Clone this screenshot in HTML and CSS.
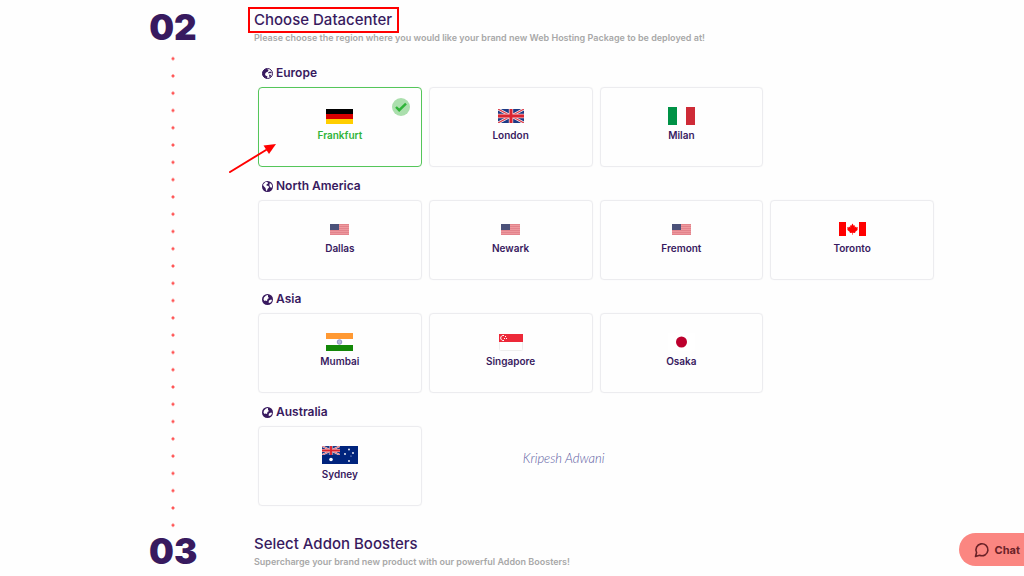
FILE: index.html
```html
<!DOCTYPE html>
<html lang="en">
<head>
    <meta charset="UTF-8">
    <meta name="viewport" content="width=device-width, initial-scale=1.0">
    <title>Choose Datacenter</title>
    <link rel="stylesheet" href="styles.css">
</head>
<body>
<svg class="sprite" aria-hidden="true">
    <symbol id="flag-us" viewBox="0 0 19 11">
        <path fill="#ee9a9f" d="M0 0h19v11H0z"/>
        <path stroke="#dd7b84" stroke-width=".8" d="M0 .4h19M0 2.5h19M0 4.6h19M0 6.6h19M0 8.6h19M0 10.6h19"/>
        <path fill="#4b5179" d="M0 0h9v6H0z"/>
    </symbol>
    <symbol id="flag-gb" viewBox="0 0 26 14" preserveAspectRatio="none">
        <path fill="#1d3a85" d="M0 0h26v14H0z"/>
        <path stroke="#fff" stroke-width="2.6" d="M0 0l26 14M26 0L0 14"/>
        <path stroke="#dc3a48" stroke-width="1.2" d="M0 0l26 14M26 0L0 14"/>
        <path stroke="#f3c9d0" stroke-width="4.4" d="M13 0v14M0 7h26"/>
        <path stroke="#d9242f" stroke-width="2.8" d="M13 0v14M0 7h26"/>
    </symbol>
    <symbol id="globe-asia" viewBox="0 0 22 22">
        <circle cx="11" cy="11" r="11" fill="#381a5f"/>
        <path fill="#fff" d="M3 11l1-4 4-4 4-1 0 4 2 2-3 2-1 4-3-1-2 1zM14 13l4-2 2 1-1 3-3 3-3-1z"/>
    </symbol>
</svg>

<main class="order">
    <section class="step">
        <div class="step-side">
            <div class="step-number">02</div>
            <div class="step-line"></div>
        </div>
        <div class="step-content">
            <h2><span class="highlight">Choose Datacenter</span></h2>
            <p class="description">Please choose the region where you would like your brand new Web Hosting Package to be deployed at!</p>

            <div class="region">
                <h3>
                    <svg class="globe" viewBox="0 0 22 22">
                        <circle cx="11" cy="11" r="10" fill="#fff" stroke="#381a5f" stroke-width="2"/>
                        <path fill="#381a5f" d="M9 1L5 3 1 8v6l4 5 5 2 1-4-4-2-1-3 2-3 4-2 1-3zM12 9l4-2 3 1v3l-3-1-3 1zM14 13l4 1-1 4-2 1z"/>
                    </svg>
                    Europe
                </h3>
                <div class="cards">
                    <label class="card">
                        <input type="radio" name="datacenter" value="frankfurt" checked>
                        <span class="flag">
                            <svg width="27" height="15" viewBox="0 0 27 15">
                                <path d="M0 0h27v5H0z"/>
                                <path fill="#d80000" d="M0 5h27v5H0z"/>
                                <path fill="#ffce00" d="M0 10h27v5H0z"/>
                            </svg>
                        </span>
                        <span class="city">Frankfurt</span>
                        <svg class="check" viewBox="0 0 18 18">
                            <circle cx="9" cy="9" r="9" fill="#abdfad"/>
                            <path fill="none" stroke="#2fb439" stroke-width="2.4" d="M4 9l3.2 3.2L14 5.6"/>
                        </svg>
                        <svg class="arrow" viewBox="0 0 50 34">
                            <path stroke="#f00" stroke-width="2" stroke-linecap="round" d="M2 30L38 8"/>
                            <path fill="#f00" d="M48 2L41 12L35.500 3.500z"/>
                        </svg>
                    </label>
                    <label class="card">
                        <input type="radio" name="datacenter" value="london">
                        <span class="flag"><svg width="26" height="14"><use href="#flag-gb"/></svg></span>
                        <span class="city">London</span>
                    </label>
                    <label class="card">
                        <input type="radio" name="datacenter" value="milan">
                        <span class="flag">
                            <svg width="27" height="18" viewBox="0 0 27 18">
                                <path fill="#009246" d="M0 0h9v18H0z"/>
                                <path fill="#fff" d="M9 0h9v18H9z"/>
                                <path fill="#ce2b37" d="M18 0h9v18h-9z"/>
                            </svg>
                        </span>
                        <span class="city">Milan</span>
                    </label>
                </div>
            </div>

            <div class="region">
                <h3>
                    <svg class="globe" viewBox="0 0 22 22">
                        <circle cx="11" cy="11" r="11" fill="#381a5f"/>
                        <path fill="#fff" d="M3 6l4-4 4 0 1 3-3 2 0 2 4 1 1 3-3 3-1 4-2-1-1-5-3-3-2-3zM15 5l3 0 2 4 0 4-3 0-2-3z"/>
                    </svg>
                    North America
                </h3>
                <div class="cards">
                    <label class="card">
                        <input type="radio" name="datacenter" value="dallas">
                        <span class="flag"><svg width="19" height="11"><use href="#flag-us"/></svg></span>
                        <span class="city">Dallas</span>
                    </label>
                    <label class="card">
                        <input type="radio" name="datacenter" value="newark">
                        <span class="flag"><svg width="19" height="11"><use href="#flag-us"/></svg></span>
                        <span class="city">Newark</span>
                    </label>
                    <label class="card">
                        <input type="radio" name="datacenter" value="fremont">
                        <span class="flag"><svg width="19" height="11"><use href="#flag-us"/></svg></span>
                        <span class="city">Fremont</span>
                    </label>
                    <label class="card">
                        <input type="radio" name="datacenter" value="toronto">
                        <span class="flag">
                            <svg width="27" height="14" viewBox="0 0 27 14">
                                <path fill="#fff" d="M0 0h27v14H0z"/>
                                <path fill="#f00" d="M0 0h7v14H0zM20 0h7v14h-7z"/>
                                <path fill="#f00" d="M13.500 1.500l1.300 2.200 1.200-.5-.3 2.300 1.300-1 .4 1 1.600-.2-.7 2 .6.5-2.800 2.200.2 1-2.500-.3v2h-.6v-2l-2.500.3.2-1L8.100 7.800l.6-.5-.7-2 1.600.2.4-1 1.300 1-.3-2.300 1.200.5z"/>
                            </svg>
                        </span>
                        <span class="city">Toronto</span>
                    </label>
                </div>
            </div>

            <div class="region">
                <h3><svg class="globe"><use href="#globe-asia"/></svg> Asia</h3>
                <div class="cards">
                    <label class="card">
                        <input type="radio" name="datacenter" value="mumbai">
                        <span class="flag">
                            <svg width="27" height="18" viewBox="0 0 27 18">
                                <path fill="#ff9933" d="M0 0h27v6H0z"/>
                                <path fill="#fff" d="M0 6h27v6H0z"/>
                                <path fill="#138808" d="M0 12h27v6H0z"/>
                                <circle cx="13.500" cy="9" r="2.300" fill="#b9b9dc" stroke="#8080bd" stroke-width=".8"/>
                            </svg>
                        </span>
                        <span class="city">Mumbai</span>
                    </label>
                    <label class="card">
                        <input type="radio" name="datacenter" value="singapore">
                        <span class="flag">
                            <svg width="24" height="17" viewBox="0 0 24 17">
                                <rect x=".5" y=".5" width="23" height="16" rx="1" fill="#fff" stroke="#eee"/>
                                <path fill="#ed2939" d="M0 0h24v8H0z"/>
                                <path fill="none" stroke="#fff" d="M5 1.500a2.600 2.600 0 1 0 0 5"/>
                                <path fill="#fff" d="M6 2h1v1H6zM5 4h1v1H5zM7 4h1v1H7z"/>
                            </svg>
                        </span>
                        <span class="city">Singapore</span>
                    </label>
                    <label class="card">
                        <input type="radio" name="datacenter" value="osaka">
                        <span class="flag">
                            <svg width="27" height="18" viewBox="0 0 27 18">
                                <path fill="#fff" d="M0 0h27v18H0z"/>
                                <circle cx="13.500" cy="9" r="5.500" fill="#bc002d"/>
                            </svg>
                        </span>
                        <span class="city">Osaka</span>
                    </label>
                </div>
            </div>

            <div class="region">
                <h3><svg class="globe"><use href="#globe-asia"/></svg> Australia</h3>
                <div class="cards">
                    <label class="card">
                        <input type="radio" name="datacenter" value="sydney">
                        <span class="flag">
                            <svg width="36" height="18" viewBox="0 0 36 18">
                                <path fill="#00247d" d="M0 0h36v18H0z"/>
                                <use href="#flag-gb" width="18" height="9"/>
                                <g fill="#fff">
                                    <circle cx="9" cy="13.500" r="1.800"/>
                                    <circle cx="27" cy="3.500" r=".9"/>
                                    <circle cx="23" cy="8" r=".9"/>
                                    <circle cx="31" cy="7" r=".9"/>
                                    <circle cx="29" cy="10" r=".5"/>
                                    <circle cx="27" cy="15" r=".9"/>
                                </g>
                            </svg>
                        </span>
                        <span class="city">Sydney</span>
                    </label>
                    <div class="signature">Kripesh Adwani</div>
                </div>
            </div>
        </div>
    </section>

    <section class="step">
        <div class="step-side">
            <div class="step-number">03</div>
        </div>
        <div class="step-content">
            <h2>Select Addon Boosters</h2>
            <p class="description">Supercharge your brand new product with our powerful Addon Boosters!</p>
        </div>
    </section>
</main>

<button type="button" class="chat">
    <svg width="16" height="16" viewBox="0 0 16 16">
        <path fill="none" stroke="#6b2228" stroke-width="1.600" stroke-linejoin="round" d="M2.600 10.500A6 6 0 1 1 5.600 13.300L1.500 14.500z"/>
    </svg>
    Chat
</button>
</body>
</html>
```
FILE: styles.css
```css
* {
    box-sizing: border-box;
}

body {
    margin: 0;
    background-color: #fefefe;
    color: #381a5f;
    font-family: "Inter", sans-serif;
}

h2, h3, p {
    margin: 0;
}

.sprite {
    display: none;
}

.order {
    padding: 0 90px 0 149px;
}

.step {
    display: flex;
    gap: 57px;
}

.step-side {
    width: 48px;
    display: flex;
    flex-direction: column;
    padding-top: 10px;
}

.step-number {
    font-size: 35px;
    font-weight: 900;
    line-height: 34px;
    text-align: center;
}

.step-line {
    flex: 1;
    margin: 6px 0 -10px;
    background-image: radial-gradient(circle, #ff5555 1px, transparent 2px);
    background-size: 48px 17px;
    background-repeat: round;
}

.step-content {
    flex: 1;
    padding-top: 10px;
}

h2 {
    font-size: 15px;
    font-weight: 500;
    line-height: 20px;
}

.highlight {
    display: inline-block;
    margin-left: -3px;
    padding: 0 4px 0 3px;
    outline: 2px solid #f00;
    outline-offset: 1px;
}

.description {
    margin-top: 2px;
    color: #a8a8a8;
    font-size: 9px;
    font-weight: 600;
    line-height: 12px;
}

.region {
    margin: 11px 0 0 4px;
}

.description + .region {
    margin-top: 21px;
}

.region:last-child {
    margin-bottom: 18px;
}

h3 {
    display: flex;
    align-items: center;
    gap: 3px;
    margin-bottom: 6px;
    padding-left: 4px;
    font-size: 12px;
    font-weight: 600;
    line-height: 16px;
}

.globe {
    width: 11px;
    height: 11px;
}

.cards {
    display: grid;
    grid-template-columns: repeat(4, 1fr);
    gap: 7px;
}

.card {
    position: relative;
    display: flex;
    flex-direction: column;
    align-items: center;
    gap: 3px;
    padding: 18px 0 25px;
    border: 1px solid #ececef;
    border-radius: 4px;
    box-shadow: 0 0 1px #ececef;
    cursor: pointer;
}

.card input {
    position: absolute;
    margin: 0;
    opacity: 0;
}

.card:has(input:checked) {
    border-color: #55c65a;
    color: #2fb439;
}

.flag {
    display: flex;
    align-items: center;
    height: 20px;
}

.city {
    font-size: 10px;
    font-weight: 600;
    line-height: 12px;
}

.check {
    position: absolute;
    top: 10px;
    right: 11px;
    width: 18px;
    height: 18px;
}

.arrow {
    position: absolute;
    top: 54px;
    left: -31px;
    width: 50px;
    height: 34px;
}

.signature {
    grid-column: 2 / 4;
    align-self: center;
    padding: 0 0 16px 94px;
    color: #5a5a9e;
    font-family: "Lato", cursive;
    font-size: 13px;
    font-style: italic;
    font-weight: 300;
    line-height: 16px;
}

.chat {
    position: fixed;
    right: 0;
    bottom: 10px;
    display: flex;
    align-items: center;
    gap: 5px;
    height: 33px;
    padding: 0 4px 0 15px;
    border: 0;
    border-radius: 17px 0 0 17px;
    background-color: #fb8681;
    color: #6b2228;
    font-family: "Inter", sans-serif;
    font-size: 11px;
    font-weight: 700;
}
```
